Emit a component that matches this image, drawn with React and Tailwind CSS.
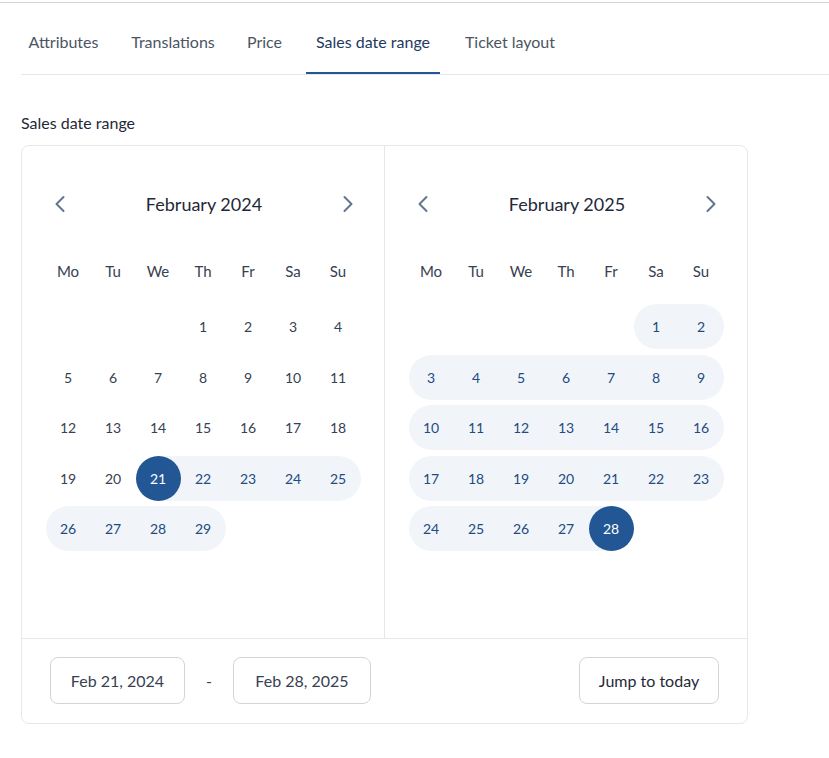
import React from "react";
import { ChevronLeft, ChevronRight } from "lucide-react";

const FONT = { fontFamily: "Lato, 'Open Sans', sans-serif" };

const WEEKDAYS = ["Mo", "Tu", "We", "Th", "Fr", "Sa", "Su"];

function Month({ title, offset, days, rangeStart, rangeEnd, startSelected, endSelected, border }) {
  const cells = [];
  for (let i = 0; i < offset; i++) cells.push(null);
  for (let d = 1; d <= days; d++) cells.push(d);

  return (
    <div className={"flex-1 flex flex-col " + (border ? "border-r border-gray-200" : "")}>
      <div className="flex items-center justify-between h-10 mt-[38px] pl-[24px] pr-[22px]">
        <button className="w-7 h-7 flex items-center justify-center text-slate-500">
          <ChevronLeft size={28} strokeWidth={1.7} />
        </button>
        <div className="text-[18px] text-[#1f2937]">{title}</div>
        <button className="w-7 h-7 flex items-center justify-center text-slate-500">
          <ChevronRight size={28} strokeWidth={1.7} />
        </button>
      </div>
      <div className="mx-auto w-[315px] grid grid-cols-7 mt-[25px]">
        {WEEKDAYS.map((w) => (
          <div key={w} className="h-[45px] flex items-center justify-center text-[15px] text-[#374151]">
            {w}
          </div>
        ))}
      </div>
      <div className="mx-auto w-[315px] grid grid-cols-7 gap-y-[5.5px] mt-[10px]">
        {cells.map((d, i) => {
          if (d === null) return <div key={"e" + i} className="h-[45px]" />;
          const col = i % 7;
          const inRange = d >= rangeStart && d <= rangeEnd;
          const isStart = startSelected && d === rangeStart;
          const isEnd = endSelected && d === rangeEnd;
          let wrap = "h-[45px] flex items-center justify-center ";
          if (inRange) {
            if (isStart) {
              wrap += col === 6 ? "" : "bg-[linear-gradient(to_right,transparent_50%,#f1f5f9_50%)] ";
            } else if (isEnd) {
              wrap += col === 0 ? "" : "bg-[linear-gradient(to_right,#f1f5f9_50%,transparent_50%)] ";
            } else {
              wrap += "bg-[#f1f5f9] ";
              const rl = col === 0 || d === 1;
              const rr = col === 6 || d === days;
              if (rl) wrap += "rounded-l-full ";
              if (rr) wrap += "rounded-r-full ";
            }
          }
          const selected = isStart || isEnd;
          return (
            <div key={d} className={wrap}>
              <div
                className={
                  "w-[45px] h-[45px] flex items-center justify-center rounded-full text-[14px] " +
                  (selected
                    ? "bg-[#235694] text-white"
                    : inRange
                    ? "text-[#234b80]"
                    : "text-[#374151]")
                }
              >
                {d}
              </div>
            </div>
          );
        })}
      </div>
    </div>
  );
}

export default function App() {
  const tabs = [
    { label: "Attributes", w: "w-[85px]" },
    { label: "Translations", w: "w-[100px]" },
    { label: "Price", w: "w-[49px]" },
    { label: "Sales date range", w: "w-[134px]", active: true },
    { label: "Ticket layout", w: "w-[106px]" },
  ];
  return (
    <div className="w-[829px] h-[758px] bg-white pt-[2px]" style={FONT}>
      <div className="h-px bg-[#d1d5db]" />
      <div className="pl-[21px]">
        <div className="flex gap-[17px] border-b border-[#e5e7eb]">
          {tabs.map((t) => (
            <button
              key={t.label}
              className={
                t.w +
                " pt-[27px] pb-[18px] text-[16px] leading-6 border-b-2 whitespace-nowrap " +
                (t.active ? "border-[#235694] text-[#1e3a5f]" : "border-transparent text-[#4b5563]")
              }
            >
              {t.label}
            </button>
          ))}
        </div>
        <div className="mt-[36px] text-[16px] leading-6 text-[#1f2937]">Sales date range</div>
        <div className="mt-[10px] w-[727px] h-[579px] border border-[#e5e7eb] rounded-lg flex flex-col">
          <div className="flex h-[492px]">
            <Month title="February 2024" offset={3} days={29} rangeStart={21} rangeEnd={29} startSelected border />
            <Month title="February 2025" offset={5} days={28} rangeStart={1} rangeEnd={28} endSelected />
          </div>
          <div className="flex-1 border-t border-[#e5e7eb] flex items-start pt-[18px] pl-[28px] pr-[28px]">
            <div className="w-[135px] h-[47px] border border-[#d1d5db] rounded-lg flex items-center justify-center text-[16px] text-[#374151]">
              Feb 21, 2024
            </div>
            <div className="w-[48px] h-[47px] flex items-center justify-center text-[16px] text-[#374151]">-</div>
            <div className="w-[138px] h-[47px] border border-[#d1d5db] rounded-lg flex items-center justify-center text-[16px] text-[#374151]">
              Feb 28, 2025
            </div>
            <div className="flex-1" />
            <button className="w-[140px] h-[47px] border border-[#d1d5db] rounded-lg flex items-center justify-center text-[16px] text-[#1f2937]">
              Jump to today
            </button>
          </div>
        </div>
      </div>
    </div>
  );
}
